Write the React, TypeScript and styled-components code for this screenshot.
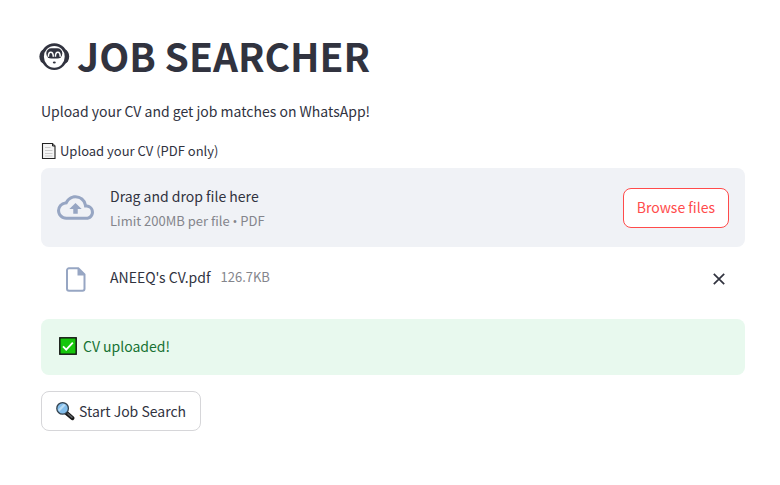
import { useRef } from "react";
import styled, { createGlobalStyle } from "styled-components";

const GlobalStyle = createGlobalStyle`
  *, *::before, *::after { box-sizing: border-box; }
  body {
    margin: 0;
    background: #ffffff;
    color: #31333f;
    font-family: "Source Sans Pro", "Noto Sans CJK SC", sans-serif;
    font-size: 14px;
    line-height: 24px;
  }
  button { font: inherit; cursor: pointer; }
`;

const Page = styled.main`
  display: flex;
  flex-direction: column;
  padding: 31px 35px 32px 41px;
`;

const Title = styled.h1`
  display: flex;
  align-items: center;
  gap: 7px;
  margin: 0 0 20px -2px;
  font-size: 39px;
  font-weight: 700;
  line-height: 48px;
`;

const Intro = styled.p`
  margin: 0 0 16px;
`;

const FieldLabel = styled.label`
  display: flex;
  align-items: center;
  gap: 3px;
  margin-bottom: 5px;
  font-size: 13px;
`;

const HiddenInput = styled.input`
  display: none;
`;

const Dropzone = styled.section`
  display: flex;
  align-items: center;
  padding: 16px;
  border-radius: 8px;
  background: #f0f2f6;
`;

const IconSlot = styled.span`
  display: flex;
  justify-content: center;
  width: 37px;
  margin-right: 16px;
  color: #97a6c3;
`;

const Instructions = styled.div`
  display: flex;
  flex: 1;
  flex-direction: column;
  gap: 3px;
`;

const Hint = styled.small`
  color: #84858c;
  font-size: 13px;
  line-height: 20px;
`;

const Bullet = styled.span`
  font-family: "Open Sans", sans-serif;
`;

const Button = styled.button<{ $accent?: boolean }>`
  display: flex;
  align-items: center;
  gap: 4px;
  height: 40px;
  padding: ${(p) => (p.$accent ? "0 13px 2px" : "0 14px 0 13px")};
  border: 1px solid ${(p) => (p.$accent ? "#ff4b4b" : "#d6d6d9")};
  border-radius: 8px;
  background: #ffffff;
  color: ${(p) => (p.$accent ? "#ff4b4b" : "#31333f")};
`;

const FileRow = styled.div`
  display: flex;
  align-items: center;
  margin: 18px 0 26px;
  padding: 0 16px;
`;

const FileInfo = styled.div`
  display: flex;
  flex: 1;
  align-items: center;
  gap: 10px;
  padding-bottom: 4px;
`;

const RemoveButton = styled.button`
  display: flex;
  padding: 0;
  border: 0;
  background: transparent;
  color: #31333f;
`;

const Alert = styled.div`
  display: flex;
  align-items: center;
  gap: 5px;
  margin-bottom: 16px;
  padding: 15px 17px 17px;
  border-radius: 8px;
  background: #e8f9ee;
  color: #177233;
`;

const Actions = styled.div`
  display: flex;
`;

const FaceIcon = () => (
  <svg width="31" height="34" viewBox="0 -4 31 34" aria-hidden="true">
    <ellipse cx="15.3" cy="14.6" rx="13.2" ry="13.4" fill="#31333f" />
    <ellipse cx="5" cy="14.6" rx="4.6" ry="7" fill="#31333f" />
    <ellipse cx="25.6" cy="14.6" rx="4.6" ry="7" fill="#31333f" />
    <ellipse cx="15.3" cy="14.8" rx="10.4" ry="10.9" fill="#fff" />
    <rect x="7.3" y="6.2" width="16" height="10.4" rx="5" fill="#31333f" />
    <path d="M9.4 14.8c0-3.2.8-4.6 2.3-4.6s2.6 1.4 2.6 4.6M16.4 14.8c0-3.2 1-4.6 2.5-4.6s2.3 1.4 2.3 4.6" fill="none" stroke="#fff" strokeWidth="1.5" />
    <ellipse cx="15.3" cy="20.4" rx="1.5" ry="1" fill="#31333f" />
  </svg>
);

const PageIcon = () => (
  <svg width="16" height="18" viewBox="0 0 16 18" aria-hidden="true">
    <path d="M1.5 1.5h10l2.5 2.5v12.5h-12.5z" fill="#f4f4f4" stroke="#222" strokeWidth="1.1" />
    <path d="M11.5 1.5v2.5h2.5" fill="#999" stroke="#222" />
    <path d="M4 5.5h5.5M4 8.5h7.5M4 11.5h7.5M4 14h7.5" stroke="#cacaca" />
  </svg>
);

const CloudIcon = () => (
  <svg width="37" height="37" viewBox="0 0 24 24" fill="currentColor" aria-hidden="true">
    <path d="M19.35 10.04A7.49 7.49 0 0 0 12 4C9.11 4 6.6 5.64 5.35 8.04A5.994 5.994 0 0 0 0 14c0 3.31 2.69 6 6 6h13c2.76 0 5-2.24 5-5 0-2.64-2.05-4.78-4.65-4.96zM19 18H6c-2.21 0-4-1.79-4-4 0-2.05 1.53-3.76 3.56-3.97l1.07-.11.5-.95A5.469 5.469 0 0 1 12 6c2.62 0 4.88 1.86 5.39 4.43l.3 1.5 1.53.11A2.98 2.98 0 0 1 22 15c0 1.65-1.35 3-3 3zM8 13h2.55v3h2.9v-3H16l-4-4-4 4z" />
  </svg>
);

const FileIcon = () => (
  <svg width="20" height="25" viewBox="0 0 20 25" aria-hidden="true">
    <path d="M3 1.3h9.3l6.2 6.2v14.2a2 2 0 0 1-2 2H3a2 2 0 0 1-2-2V3.3a2 2 0 0 1 2-2z" fill="none" stroke="currentColor" strokeWidth="2" />
    <path d="M11.5 1l7.5 7.5h-7.5z" fill="currentColor" />
  </svg>
);

const CloseIcon = () => (
  <svg width="20" height="20" viewBox="0 0 20 20" aria-hidden="true">
    <path d="M4.8 4.8l10.4 10.4M15.2 4.8L4.8 15.2" stroke="currentColor" strokeWidth="1.7" />
  </svg>
);

const CheckIcon = () => (
  <svg width="20" height="20" viewBox="0 0 20 20" aria-hidden="true">
    <rect x="1.8" y="1.8" width="16.4" height="16.4" fill="#16c60c" stroke="#111" strokeWidth="1.4" />
    <path d="M5 10.4l3.2 3.2 6.6-7" fill="none" stroke="#fff" strokeWidth="1.8" />
  </svg>
);

const SearchIcon = () => (
  <svg width="20" height="20" viewBox="0 0 20 20" aria-hidden="true">
    <path d="M11.3 11.8l6 5.2" stroke="#171717" strokeWidth="4.2" strokeLinecap="round" />
    <path d="M13 12.8l4 3.5" stroke="#5b5f63" strokeWidth="1.6" strokeLinecap="round" />
    <circle cx="7.6" cy="7.4" r="5.8" fill="#83beec" stroke="#34424d" strokeWidth="1.3" />
    <path d="M3.2 8.5l5.5-5.6 2.2 1L4.4 10.5z" fill="#b9dcf5" />
  </svg>
);

export default function App() {
  const fileInput = useRef<HTMLInputElement>(null);

  return (
    <>
      <GlobalStyle />
      <Page>
        <Title>
          <FaceIcon />
          JOB SEARCHER
        </Title>
        <Intro>Upload your CV and get job matches on WhatsApp!</Intro>
        <FieldLabel htmlFor="cv">
          <PageIcon />
          Upload your CV (PDF only)
        </FieldLabel>
        <Dropzone>
          <HiddenInput ref={fileInput} id="cv" type="file" accept=".pdf" />
          <IconSlot>
            <CloudIcon />
          </IconSlot>
          <Instructions>
            <span>Drag and drop file here</span>
            <Hint>
              Limit 200MB per file <Bullet>•</Bullet> PDF
            </Hint>
          </Instructions>
          <Button type="button" $accent onClick={() => fileInput.current?.click()}>
            Browse files
          </Button>
        </Dropzone>
        <FileRow>
          <IconSlot>
            <FileIcon />
          </IconSlot>
          <FileInfo>
            <span>ANEEQ's CV.pdf</span>
            <Hint>126.7KB</Hint>
          </FileInfo>
          <RemoveButton type="button" aria-label="Remove file">
            <CloseIcon />
          </RemoveButton>
        </FileRow>
        <Alert role="status">
          <CheckIcon />
          CV uploaded!
        </Alert>
        <Actions>
          <Button type="button">
            <SearchIcon />
            Start Job Search
          </Button>
        </Actions>
      </Page>
    </>
  );
}
